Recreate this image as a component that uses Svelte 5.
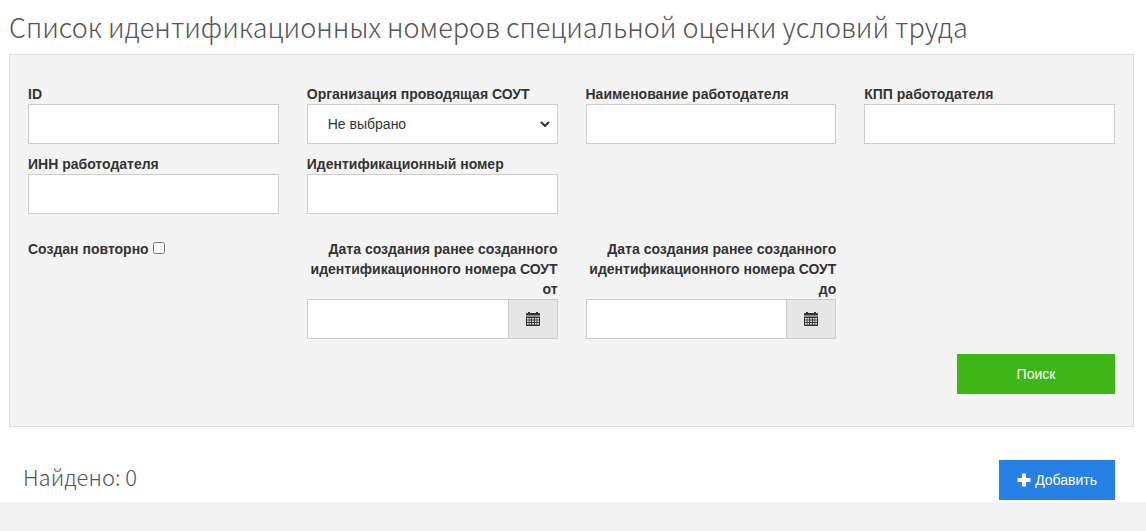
<script lang="ts">
    let organization = $state("");
    let repeated = $state(false);

    const dateFields = [
        { id: "date-from", label: "Дата создания ранее созданного идентификационного номера СОУТ от" },
        { id: "date-to", label: "Дата создания ранее созданного идентификационного номера СОУТ до" },
    ];
</script>

{#snippet textField(id: string, label: string)}
    <div class="field">
        <label for={id}>{label}</label>
        <input class="control" type="text" {id} />
    </div>
{/snippet}

<main>
    <h1>Список идентификационных номеров специальной оценки условий труда</h1>

    <form class="filter" onsubmit={(e) => e.preventDefault()}>
        <div class="row">
            {@render textField("id", "ID")}
            <div class="field">
                <label for="organization">Организация проводящая СОУТ</label>
                <div class="select">
                    <select class="control" id="organization" bind:value={organization}>
                        <option value="">Не выбрано</option>
                    </select>
                    <svg class="arrow" width="10" height="6" viewBox="0 0 10 6">
                        <path d="M1 1l4 4 4-4" fill="none" stroke="#333" stroke-width="2" />
                    </svg>
                </div>
            </div>
            {@render textField("employer-name", "Наименование работодателя")}
            {@render textField("employer-kpp", "КПП работодателя")}
            {@render textField("employer-inn", "ИНН работодателя")}
            {@render textField("number", "Идентификационный номер")}
        </div>

        <div class="row dates">
            <div class="check">
                <label for="repeated">Создан повторно</label>
                <input type="checkbox" id="repeated" bind:checked={repeated} />
            </div>
            {#each dateFields as { id, label }}
                <div class="field date">
                    <label for={id}>{label}</label>
                    <div class="input-group">
                        <input class="control" type="text" {id} />
                        <button class="addon" type="button" aria-label="Календарь">
                            <svg width="14" height="14" viewBox="0 0 14 14" fill="currentColor">
                                <path d="M2 0h2v1h6V0h2v1h1.500l.5.5V3.500H0V1.500L.5 1H2z" />
                                <path
                                    fill-rule="evenodd"
                                    d="M0 4.500h14v9l-.5.5H.5l-.5-.5zM1 6v1.600h1.800V6zm2.500 0v1.600h1.600V6zm2.600 0v1.600h1.800V6zm2.800 0v1.600h1.600V6zm2.300 0v1.600H13V6zM1 8.400V10h1.800V8.400zm2.500 0V10h1.600V8.400zm2.600 0V10h1.800V8.400zm2.800 0V10h1.600V8.400zm2.300 0V10H13V8.400zM1 11v1.600h1.800V11zm2.500 0v1.600h1.600V11zm2.600 0v1.600h1.800V11zm2.800 0v1.600h1.600V11zm2.300 0v1.600H13V11z"
                                />
                            </svg>
                        </button>
                    </div>
                </div>
            {/each}
        </div>

        <div class="actions">
            <button class="btn search" type="submit">Поиск</button>
        </div>
    </form>

    <div class="results">
        <h2>Найдено: 0</h2>
        <button class="btn add" type="button">
            <svg width="14" height="14" viewBox="0 0 14 14" fill="currentColor">
                <path d="M5 .5h4V5h4.500v4H9v4.500H5V9H.5V5H5z" />
            </svg>
            Добавить
        </button>
    </div>
</main>

<style>
    :global(body) {
        margin: 0;
        background: #f2f2f2;
    }

    main {
        padding: 8px 12px 2px 9px;
        background: #fff;
        color: #333;
        font: 14px/20px "Liberation Sans", Arial, sans-serif;
    }

    h1,
    h2 {
        margin: 0;
        color: #555;
        font-family: "Noto Sans CJK SC", "Open Sans", sans-serif;
        font-weight: 300;
    }

    h1 {
        padding-bottom: 8px;
        font-size: 27px;
        line-height: 38px;
    }

    h2 {
        padding-left: 14px;
        font-size: 22px;
        line-height: 32px;
    }

    .filter {
        padding: 29px 18px 32px;
        background: #f4f4f4;
        border: 1px solid #ddd;
    }

    .row {
        display: grid;
        grid-template-columns: repeat(4, minmax(0, 1fr));
        gap: 10px 28px;
    }

    .dates {
        margin-top: 25px;
    }

    label {
        font-weight: 700;
    }

    .field {
        display: flex;
        flex-direction: column;
    }

    .date {
        text-align: right;
    }

    .control {
        box-sizing: border-box;
        width: 100%;
        height: 40px;
        padding: 0 20px;
        border: 1px solid #ccc;
        border-radius: 0;
        background: #fff;
        color: #333;
        font: inherit;
    }

    .select {
        position: relative;
        display: flex;
    }

    select.control {
        appearance: none;
    }

    .arrow {
        position: absolute;
        top: 17px;
        right: 8px;
        pointer-events: none;
    }

    .check {
        display: flex;
        align-items: flex-start;
        gap: 4px;
    }

    .check input {
        width: 12px;
        height: 12px;
        margin: 3px 0;
    }

    .input-group {
        display: flex;
    }

    .input-group .control {
        flex: 1;
        min-width: 0;
    }

    .addon {
        display: flex;
        align-items: center;
        justify-content: center;
        width: 49px;
        padding: 0;
        border: 1px solid #ccc;
        border-left: 0;
        background: #e6e6e6;
        color: #333;
    }

    .actions {
        display: flex;
        justify-content: flex-end;
        margin-top: 15px;
    }

    .btn {
        height: 40px;
        padding: 0 18px;
        border: 0;
        color: #fff;
        font: inherit;
        cursor: pointer;
    }

    .search {
        width: 158px;
        background: #3eb618;
    }

    .results {
        display: flex;
        justify-content: space-between;
        padding: 33px 19px 0 0;
    }

    .add {
        display: flex;
        align-items: center;
        gap: 4px;
        background: #2780e3;
    }
</style>
